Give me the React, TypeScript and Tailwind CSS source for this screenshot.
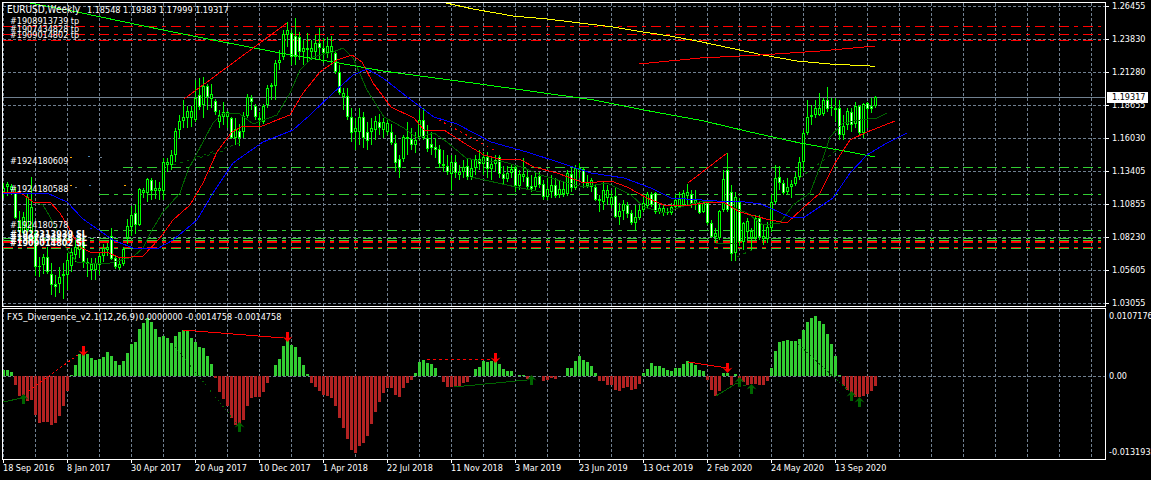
import React from 'react'

// [bodyTop, bodyBottom, wickTop, wickBottom, bear]
const candles: number[][] = [
  [188,192,183,198,0],[184,187,182,196,0],[186,190,184,195,0],[192,218,187,219,1],[220,232,211,240,0],[217,233,212,236,0],[197,230,194,232,0],[207,233,177,240,0],
  [233,267,231,276,1],[266,267,257,277,0],[257,265,254,274,0],[257,272,247,274,1],[274,285,263,295,1],[284,287,275,297,1],[277,284,267,293,0],[274,276,263,299,0],
  [260,275,253,290,0],[252,266,248,272,0],[247,255,240,262,0],[243,250,238,258,0],[242,262,236,268,1],[262,264,258,277,0],[264,270,258,280,0],[263,270,258,280,0],
  [256,265,252,275,0],[248,256,244,262,0],[247,250,243,256,0],[236,259,228,260,1],[258,267,255,269,1],[264,268,258,270,0],[249,264,247,266,0],[226,238,219,244,0],
  [215,227,206,236,0],[213,225,204,234,1],[189,225,188,226,0],[190,193,188,198,0],[179,193,178,202,0],[180,191,178,200,1],[188,191,180,199,0],[188,191,182,200,0],
  [162,191,158,200,0],[162,165,158,172,0],[155,165,150,170,0],[131,155,128,162,0],[121,130,115,138,0],[117,121,100,128,0],[111,118,106,128,0],[111,118,106,127,0],
  [98,120,80,122,0],[95,107,78,110,1],[86,105,77,118,0],[86,97,84,110,1],[94,99,84,108,0],[101,112,99,115,1],[115,122,110,128,0],[112,117,102,125,0],
  [112,117,111,128,0],[118,138,117,139,1],[129,138,118,145,0],[131,138,124,146,1],[116,132,112,138,0],[97,116,94,118,0],[98,102,95,110,1],[106,117,104,120,1],
  [118,120,112,128,0],[106,122,104,124,0],[88,105,85,108,0],[85,87,83,100,0],[63,86,60,100,0],[60,63,50,70,0],[34,57,30,60,0],[30,35,22,47,0],
  [33,57,30,65,1],[36,57,18,65,1],[37,52,32,60,1],[48,52,40,65,0],[48,50,33,62,0],[48,52,40,60,0],[43,52,35,60,0],[43,48,28,60,1],
  [48,53,38,63,1],[46,53,37,58,0],[46,52,36,65,0],[53,72,50,74,1],[72,93,65,95,1],[93,97,88,110,0],[96,117,88,120,1],[117,133,108,142,1],
  [128,132,118,150,0],[117,132,108,145,0],[117,138,112,148,1],[132,141,122,150,1],[128,132,118,145,0],[121,130,116,140,0],[122,128,114,135,1],[122,130,118,138,0],
  [123,132,119,135,0],[132,143,124,145,1],[143,163,135,172,1],[159,168,155,178,1],[137,159,135,162,0],[137,139,122,155,0],[139,145,128,150,1],[140,145,132,153,0],
  [120,137,110,140,0],[120,138,108,140,1],[138,149,125,152,1],[144,148,132,155,1],[147,150,138,158,1],[149,164,145,168,1],[164,166,150,172,0],[166,172,155,175,1],
  [162,174,155,190,0],[162,173,155,178,1],[172,175,165,180,0],[167,172,160,178,0],[166,177,158,180,1],[168,177,160,180,0],[159,168,155,175,0],[159,164,150,170,1],
  [157,164,152,175,0],[157,169,152,178,1],[164,169,158,180,0],[160,164,155,172,0],[157,174,155,178,1],[174,179,166,185,1],[173,179,166,182,0],[169,173,165,178,0],
  [168,186,165,192,1],[174,186,170,190,0],[174,177,158,182,0],[177,187,170,190,1],[186,189,175,192,1],[177,187,172,190,0],[176,185,172,188,1],[184,197,180,200,1],
  [189,197,178,200,0],[185,192,175,198,0],[185,196,178,198,1],[189,195,180,198,0],[189,194,182,197,0],[173,194,170,196,0],[174,188,168,192,1],[168,188,165,190,0],
  [168,170,163,178,0],[169,183,168,188,1],[183,186,175,188,0],[180,187,178,192,0],[187,200,185,201,1],[199,201,195,212,0],[190,202,182,210,0],[190,198,185,205,0],
  [197,205,190,208,0],[196,217,188,218,1],[211,217,203,225,0],[204,211,200,220,0],[205,214,202,218,1],[213,223,210,225,1],[217,223,205,230,0],[210,218,205,220,0],
  [203,210,195,212,0],[194,206,192,208,0],[194,205,192,207,1],[193,212,192,214,1],[208,212,204,214,0],[208,213,205,216,0],[212,213,208,215,0],[207,213,203,215,0],
  [200,207,195,209,0],[199,207,192,208,0],[193,205,190,206,0],[192,196,184,205,0],[194,205,190,208,1],[200,203,190,210,0],[204,213,201,214,1],[203,212,201,213,0],
  [203,223,200,225,1],[223,237,220,238,1],[233,237,228,243,0],[211,238,210,240,0],[179,210,170,212,0],[170,210,153,212,1],[192,254,185,261,1],[197,253,192,261,0],
  [202,242,198,246,1],[223,242,222,250,0],[221,232,218,240,0],[231,238,228,250,0],[218,238,215,240,0],[218,237,215,240,1],[236,239,225,245,0],[227,239,222,243,0],
  [202,228,195,232,0],[178,202,165,204,0],[177,183,166,190,1],[183,193,180,195,1],[187,192,178,195,0],[184,187,180,198,0],[177,184,172,186,0],[162,177,157,180,0],
  [133,162,130,172,0],[117,133,100,135,0],[115,117,105,125,0],[108,115,100,118,0],[108,115,93,116,0],[100,114,98,116,0],[100,109,87,112,1],[107,108,98,116,0],
  [108,110,98,122,0],[108,135,100,140,1],[126,135,115,140,0],[111,125,108,130,0],[112,125,108,132,1],[106,124,102,128,0],[106,133,105,135,1],[104,133,103,138,0],
  [103,109,102,128,1],[106,109,98,113,1],[97,106,96,108,0],
]

// bar end in px, one per week, zero line is y=376
const histogram = [
  370,370,372,385,396,395,401,400,415,423,422,422,425,423,416,406,391,375,365,354,354,354,358,360,359,357,352,356,361,365,361,353,
  344,342,329,323,318,322,329,337,336,338,343,336,332,330,330,338,342,347,348,356,364,378,392,399,406,418,425,425,420,406,398,397,
  397,392,383,376,365,359,346,340,345,347,357,365,374,383,387,391,395,396,398,406,418,428,439,450,453,446,443,436,424,412,402,393,
  388,388,395,397,388,383,380,373,362,360,363,364,368,376,382,387,387,387,387,383,382,376,369,367,361,362,361,360,364,369,371,371,
  376,375,375,379,380,376,376,381,380,378,379,376,376,368,368,361,356,360,362,366,373,381,381,385,385,390,391,388,387,390,389,384,
  373,369,363,366,366,368,370,371,368,368,364,361,362,365,370,371,380,390,396,391,373,373,385,374,385,382,385,384,384,385,385,381,
  368,351,342,341,340,341,341,339,330,322,318,316,321,324,334,344,356,375,386,390,393,397,397,396,394,391,386,
]

const priceLabels = ['1.26455','1.23830','1.21280','1.18655','1.16030','1.13405','1.10855','1.08230','1.05605','1.03055']
const dates = ['18 Sep 2016','8 Jan 2017','30 Apr 2017','20 Aug 2017','10 Dec 2017','1 Apr 2018','22 Jul 2018','11 Nov 2018','3 Mar 2019','23 Jun 2019','13 Oct 2019','2 Feb 2020','24 May 2020','13 Sep 2020']
const gridX = Array.from({ length: 35 }, (_, i) => 3 + 32 * i)

const slowLine = '30,3 77,12 163,30 213,40 280,53 333,62 383,71 480,84 594,100 644,110 704,121 750,132 800,143 850,152 875,157'
const yellowLine = '446,3 473,9 513,16 547,19 580,23 613,27 643,32 670,36 697,41 730,48 763,55 797,61 830,64 870,66 875,67'
const fastGreen = '33,202 43,205 50,217 60,237 67,250 77,262 87,263 110,263 133,257 143,248 152,230 163,212 180,193 188,170 195,157 213,123 223,113 240,114 253,124 277,115 290,93 300,70 313,57 333,52 343,48 353,58 367,90 384,117 404,128 417,138 434,133 447,142 466,158 484,162 501,161 524,168 541,175 564,182 584,187 607,183 631,195 644,207 664,213 684,206 703,201 723,203 747,213 763,225 780,223 793,205 810,193 820,167 830,137 843,123 860,120 877,118 887,113'
const midRed = '3,193 20,192 33,202 50,202 60,213 70,230 80,247 90,252 107,252 120,258 143,256 160,238 173,220 190,205 203,183 217,152 232,132 243,126 260,127 277,120 290,115 303,93 320,72 337,60 352,55 362,62 373,83 391,107 414,118 424,130 444,130 464,143 484,155 499,159 521,160 534,167 557,173 584,183 611,181 627,187 647,198 664,205 684,206 704,203 723,202 740,212 770,220 787,223 803,208 820,193 835,163 850,140 867,132 895,121'
const blueLine = '3,193 47,193 67,202 83,219 113,240 133,248 157,249 173,240 197,220 213,193 233,163 240,158 263,142 293,130 310,115 333,93 353,75 367,69 383,78 411,100 434,117 457,124 491,142 527,152 561,163 591,173 624,178 651,188 671,198 717,201 737,201 761,204 790,217 803,218 833,198 850,173 867,155 887,143 907,133'

function Trend({ points, color, dash }: { points: string; color: string; dash?: string }) {
  return <polyline points={points} fill="none" stroke={color} strokeWidth={1} strokeDasharray={dash} shapeRendering="crispEdges" />
}

function Level({ y, color, from = 3 }: { y: number; color: string; from?: number }) {
  return <line x1={from} x2={1101} y1={y + 0.5} y2={y + 0.5} stroke={color} strokeDasharray="10 5 4 5" shapeRendering="crispEdges" />
}

function Arrow({ x, y, up }: { x: number; y: number; up?: boolean }) {
  const d = 'M0 0 L5 5.5 L1.5 4 L1.5 10 L-1.5 10 L-1.5 4 L-5 5.5 Z'
  return <path d={d} fill={up ? '#006400' : '#ff0000'} transform={up ? `translate(${x + 0.5} ${y})` : `translate(${x + 0.5} ${y}) scale(1 -1)`} />
}

function Grid({ top, bottom }: { top: number; bottom: number }) {
  return (
    <>
      {gridX.map((x) => (
        <line key={x} x1={x + 0.5} x2={x + 0.5} y1={top} y2={bottom} stroke="#708090" strokeDasharray="3 2" shapeRendering="crispEdges" />
      ))}
    </>
  )
}

function MainChart() {
  return (
    <svg width={1102} height={303} viewBox="3 3 1102 303" className="block">
      <Grid top={3} bottom={306} />
      {priceLabels.map((_, i) => (
        <line key={i} x1={3} x2={1105} y1={6.5 + 33 * i} y2={6.5 + 33 * i} stroke="#708090" strokeDasharray="3 2" shapeRendering="crispEdges" />
      ))}
      <line x1={3} x2={1105} y1={97.5} y2={97.5} stroke="#708090" shapeRendering="crispEdges" />

      <Level y={26} color="#ff0000" />
      <Level y={34} color="#ff0000" />
      <Level y={40} color="#ff0000" />
      <Level y={167} color="#32cd32" from={123} />
      <Level y={194} color="#32cd32" from={99} />
      <Level y={230} color="#32cd32" from={99} />
      <Level y={238} color="#32cd32" />
      <Level y={240} color="#32cd32" />
      <Level y={241} color="#ff0000" />
      <Level y={242} color="#ff0000" />
      <Level y={247} color="#ff0000" />
      <Level y={248} color="#32cd32" />

      {candles.map(([top, bot, hi, lo, bear], i) => {
        const x = 3 + 4 * i
        return (
          <g key={i} shapeRendering="crispEdges">
            <rect x={x} y={hi} width={1} height={lo - hi} fill="#00ff00" />
            <rect x={x - 1} y={top} width={3} height={Math.max(bot - top, 1)} fill="#00ff00" />
            {bot - top > 2 && <rect x={x} y={top + 1} width={1} height={bot - top - 2} fill={bear ? '#ffffff' : '#000000'} />}
          </g>
        )
      })}

      <Trend points={slowLine} color="#00ff00" />
      <Trend points={yellowLine} color="#ffff00" />
      <Trend points="639,64 700,58 760,55 820,51 875,46" color="#ff0000" />
      <Trend points="184,99 287,23" color="#ff0000" />
      <Trend points="688,183 727,153" color="#ff0000" />
      <Trend points="439,120 494,150" color="#ff0000" dash="2 4" />
      <Trend points="197,157 240,143" color="#006400" dash="3 4" />
      <Trend points="173,165 227,150" color="#006400" dash="3 4" />
      <Trend points="471,177 516,187 541,192" color="#006400" />
      <Trend points="716,243 737,243" color="#006400" />
      <Trend points="737,257 752,250" color="#006400" dash="3 4" />
      <Trend points="800,178 837,150" color="#006400" dash="3 4" />
      <Trend points={fastGreen} color="#006400" />
      <Trend points={midRed} color="#ff0000" />
      <Trend points={blueLine} color="#0000ff" />

      {[[70,157,'#ffa500'],[88,156,'#4682b4'],[100,157,'#708090'],[70,185,'#ffa500'],[75,187,'#708090'],[89,185,'#4682b4'],[124,185,'#ffa500'],[97,237,'#ffffff'],[90,228,'#0000ff']].map(([x, y, c], i) => (
        <rect key={i} x={x as number} y={y as number} width={2} height={1} fill={c as string} />
      ))}

      <g className="fill-white text-[9px] font-['DejaVu_Sans_Condensed','DejaVu_Sans',sans-serif]">
        <text x={7} y={13} className="text-[10px]">EURUSD,Weekly</text>
        <text x={87} y={13}>1.18548 1.19383 1.17999 1.19317</text>
        <text x={10} y={24}>#1908913739 tp</text>
        <text x={10} y={32}>#1907434828 tp</text>
        <text x={10} y={38}>#1909014802 tp</text>
        <text x={10} y={164}>#1924180609</text>
        <text x={10} y={192}>#1924180588</text>
        <text x={10} y={228}>#1924180578</text>
        <text x={10} y={237} className="font-bold">#1923313939 SL</text>
        <text x={10} y={241} className="font-bold">#1907434828 SL</text>
        <text x={10} y={246} className="font-bold">#1909014802 SL</text>
      </g>
    </svg>
  )
}

function IndicatorChart() {
  return (
    <svg width={1102} height={150} viewBox="3 309 1102 150" className="block">
      <Grid top={309} bottom={459} />
      <line x1={3} x2={1105} y1={376.5} y2={376.5} stroke="#708090" strokeDasharray="3 2" shapeRendering="crispEdges" />
      {histogram.map((y, i) => {
        const x = 2 + 4 * i
        if (y === 376) return null
        return y < 376 ? (
          <rect key={i} x={x} y={y} width={3} height={376 - y} fill="#32cd32" shapeRendering="crispEdges" />
        ) : (
          <rect key={i} x={x} y={376} width={3} height={y - 376} fill="#b22222" shapeRendering="crispEdges" />
        )
      })}
      <Trend points="28,391 78,355" color="#ff0000" dash="2 3" />
      <Trend points="183,330 283,338" color="#ff0000" />
      <Trend points="427,360 494,359" color="#ff0000" dash="3 3" />
      <Trend points="688,362 727,368" color="#ff0000" />
      <Trend points="3,402 22,398" color="#006400" />
      <Trend points="175,347 238,425" color="#006400" dash="1 3" />
      <Trend points="454,387 527,380" color="#006400" />
      <Trend points="716,396 737,383" color="#006400" />
      <Trend points="737,383 751,388" color="#006400" dash="3 3" />
      <Trend points="798,344 850,392" color="#006400" dash="2 2" />
      <Arrow x={83} y={356} />
      <Arrow x={287} y={342} />
      <Arrow x={495} y={363} />
      <Arrow x={727} y={373} />
      <Arrow x={23} y={394} up />
      <Arrow x={239} y={422} up />
      <Arrow x={531} y={375} up />
      <Arrow x={739} y={377} up />
      <Arrow x={751} y={384} up />
      <Arrow x={851} y={391} up />
      <Arrow x={859} y={397} up />
      <g className="fill-white text-[9px] font-['DejaVu_Sans_Condensed','DejaVu_Sans',sans-serif]">
        <text x={7} y={320} className="text-[9.5px]">FX5_Divergence_v2.1(12,26,9)</text>
        <text x={139} y={320}>0.0000000 -0.0014758 -0.0014758</text>
      </g>
    </svg>
  )
}

export default function App() {
  return (
    <div className="w-[1151px] h-[480px] bg-black pt-[2px] pl-[2px] overflow-hidden text-white text-[9px] font-['DejaVu_Sans_Condensed','DejaVu_Sans',sans-serif]">
      <div className="flex h-[305px]">
        <div className="w-[1104px] border border-white">
          <MainChart />
        </div>
        <div className="relative flex-1">
          <div className="-mt-[12px]">
            {priceLabels.map((p) => (
              <div key={p} className="h-[33px] flex items-center">
                <span className="w-[3px] h-px bg-white" />
                <span className="ml-[3px] leading-none">{p}</span>
              </div>
            ))}
          </div>
          <div className="absolute left-px top-[90px] w-[41px] h-[11px] bg-white text-black pl-[5px] flex items-center leading-none">1.19317</div>
        </div>
      </div>
      <div className="flex h-[152px] mt-px">
        <div className="w-[1104px] border border-white">
          <IndicatorChart />
        </div>
        <div className="flex-1 pl-[3px] leading-none">
          <div className="h-[16px] flex items-center whitespace-nowrap">0.0107176</div>
          <div className="h-[16px] mt-[44px] flex items-center">0.00</div>
          <div className="h-[16px] mt-[60px] flex items-center whitespace-nowrap">-0.0131933</div>
        </div>
      </div>
      <div className="flex pl-px">
        {dates.map((d) => (
          <div key={d} className="w-[64px] shrink-0 whitespace-nowrap">
            <div className="w-px h-[3px] bg-white" />
            <div className="mt-[1px] leading-none">{d}</div>
          </div>
        ))}
      </div>
    </div>
  )
}
